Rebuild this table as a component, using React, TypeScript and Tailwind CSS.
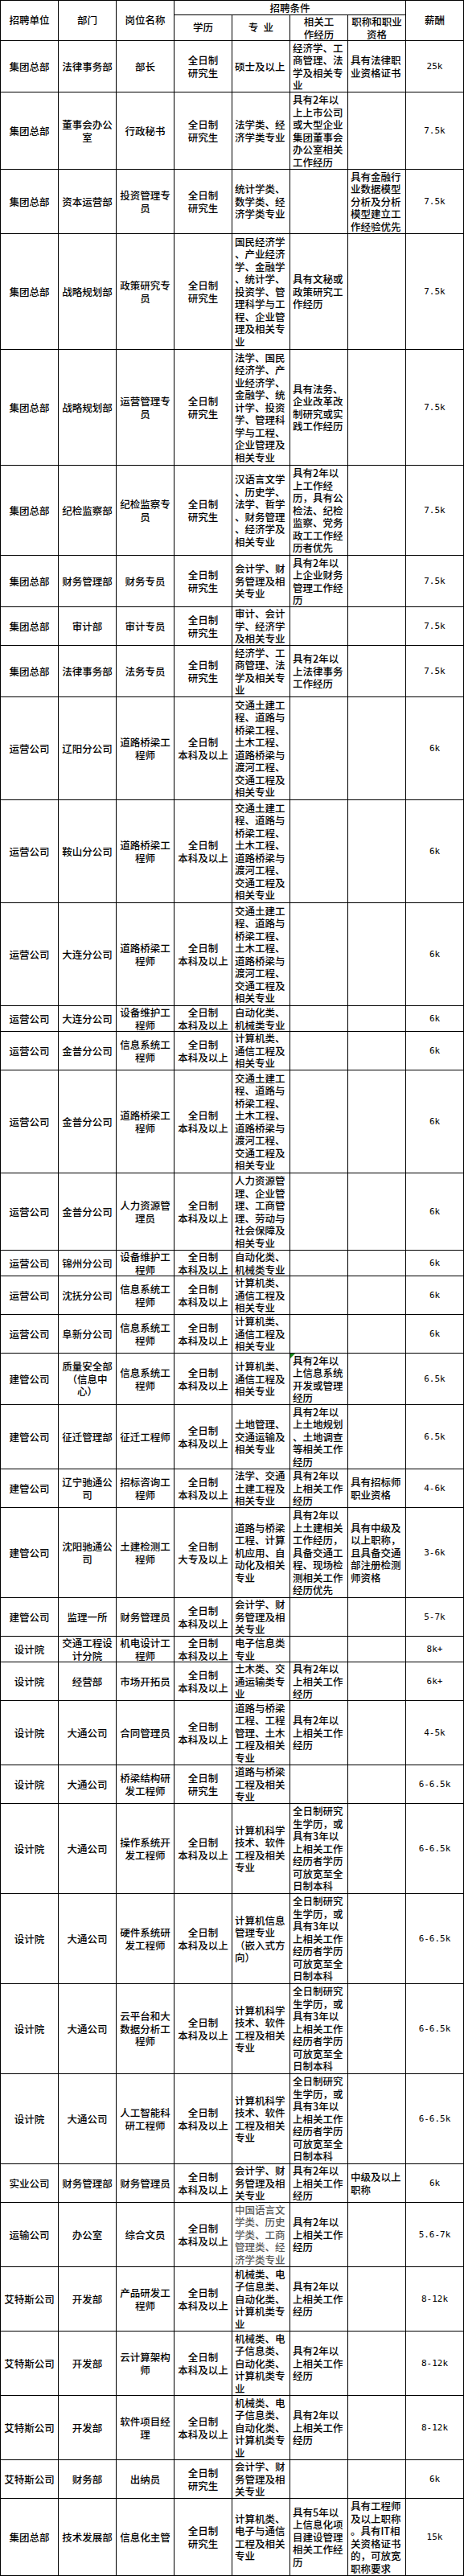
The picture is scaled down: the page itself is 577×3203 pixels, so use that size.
import React from "react";

type Row = { h: number; c: string[]; gray?: boolean; mark?: boolean };

const QR = "全日制\n研究生";
const QB = "全日制\n本科及以上";
const ROAD =
  "交通土建工\n程、道路与\n桥梁工程、\n土木工程、\n道路桥梁与\n渡河工程、\n交通工程及\n相关专业";
const AUTO = "自动化类、\n机械类专业";
const COMP = "计算机类、\n通信工程及\n相关专业";
const ACC = "会计学、财\n务管理及相\n关专业";
const Y2 = "具有2年以\n上相关工作\n经历";
const CSE = "计算机科学\n技术、软件\n工程及相关\n专业";
const GRAD =
  "全日制研究\n生学历，或\n具有3年以\n上相关工作\n经历者学历\n可放宽至全\n日制本科";
const ATS = "机械类、电\n子信息类、\n自动化类、\n计算机类专\n业";

const rows: Row[] = [
  { h: 64, c: ["集团总部", "法律事务部", "部长", QR, "硕士及以上", "经济学、工\n商管理、法\n学及相关专\n业", "具有法律职\n业资格证书", "25k"] },
  { h: 96, c: ["集团总部", "董事会办公\n室", "行政秘书", QR, "法学类、经\n济学类专业", "具有2年以\n上上市公司\n或大型企业\n集团董事会\n办公室相关\n工作经历", "", "7.5k"] },
  { h: 80, c: ["集团总部", "资本运营部", "投资管理专\n员", QR, "统计学类、\n数学类、经\n济学类专业", "", "具有金融行\n业数据模型\n分析及分析\n模型建立工\n作经验优先", "7.5k"] },
  { h: 144, c: ["集团总部", "战略规划部", "政策研究专\n员", QR, "国民经济学\n、产业经济\n学、金融学\n、统计学、\n投资学、管\n理科学与工\n程、企业管\n理及相关专\n业", "具有文秘或\n政策研究工\n作经历", "", "7.5k"] },
  { h: 144, c: ["集团总部", "战略规划部", "运营管理专\n员", QR, "法学、国民\n经济学、产\n业经济学、\n金融学、统\n计学、投资\n学、管理科\n学与工程、\n企业管理及\n相关专业", "具有法务、\n企业改革改\n制研究或实\n践工作经历", "", "7.5k"] },
  { h: 112, c: ["集团总部", "纪检监察部", "纪检监察专\n员", QR, "汉语言文学\n、历史学、\n法学、哲学\n、财务管理\n、经济学及\n相关专业", "具有2年以\n上工作经\n历，具有公\n检法、纪检\n监察、党务\n政工工作经\n历者优先", "", "7.5k"] },
  { h: 64, c: ["集团总部", "财务管理部", "财务专员", QR, "会计学、财\n务管理及相\n关专业", "具有2年以\n上企业财务\n管理工作经\n历", "", "7.5k"] },
  { h: 48, c: ["集团总部", "审计部", "审计专员", QR, "审计、会计\n学、经济学\n及相关专业", "", "", "7.5k"] },
  { h: 64, c: ["集团总部", "法律事务部", "法务专员", QR, "经济学、工\n商管理、法\n学及相关专\n业", "具有2年以\n上法律事务\n工作经历", "", "7.5k"] },
  { h: 128, c: ["运营公司", "辽阳分公司", "道路桥梁工\n程师", QB, ROAD, "", "", "6k"] },
  { h: 128, c: ["运营公司", "鞍山分公司", "道路桥梁工\n程师", QB, ROAD, "", "", "6k"] },
  { h: 128, c: ["运营公司", "大连分公司", "道路桥梁工\n程师", QB, ROAD, "", "", "6k"] },
  { h: 32, c: ["运营公司", "大连分公司", "设备维护工\n程师", QB, AUTO, "", "", "6k"] },
  { h: 48, c: ["运营公司", "金普分公司", "信息系统工\n程师", QB, COMP, "", "", "6k"] },
  { h: 128, c: ["运营公司", "金普分公司", "道路桥梁工\n程师", QB, ROAD, "", "", "6k"] },
  { h: 96, c: ["运营公司", "金普分公司", "人力资源管\n理员", QB, "人力资源管\n理、企业管\n理、工商管\n理、劳动与\n社会保障及\n相关专业", "", "", "6k"] },
  { h: 32, c: ["运营公司", "锦州分公司", "设备维护工\n程师", QB, AUTO, "", "", "6k"] },
  { h: 48, c: ["运营公司", "沈抚分公司", "信息系统工\n程师", QB, COMP, "", "", "6k"] },
  { h: 48, c: ["运营公司", "阜新分公司", "信息系统工\n程师", QB, COMP, "", "", "6k"] },
  { h: 64, mark: true, c: ["建管公司", "质量安全部\n（信息中\n心）", "信息系统工\n程师", QB, COMP, "具有2年以\n上信息系统\n开发或管理\n经历", "", "6.5k"] },
  { h: 80, c: ["建管公司", "征迁管理部", "征迁工程师", QB, "土地管理、\n交通运输及\n相关专业", "具有2年以\n上土地规划\n、土地调查\n等相关工作\n经历", "", "6.5k"] },
  { h: 48, c: ["建管公司", "辽宁驰通公\n司", "招标咨询工\n程师", QB, "法学、交通\n土建工程及\n相关专业", Y2, "具有招标师\n职业资格", "4-6k"] },
  { h: 112, c: ["建管公司", "沈阳驰通公\n司", "土建检测工\n程师", "全日制\n大专及以上", "道路与桥梁\n工程、计算\n机应用、自\n动化及相关\n专业", "具有2年以\n上土建相关\n工作经历，\n具备交通工\n程、现场检\n测相关工作\n经历优先", "具有中级及\n以上职称，\n且具备交通\n部注册检测\n师资格", "3-6k"] },
  { h: 48, c: ["建管公司", "监理一所", "财务管理员", QB, ACC, "", "", "5-7k"] },
  { h: 32, c: ["设计院", "交通工程设\n计分院", "机电设计工\n程师", QB, "电子信息类\n专业", "", "", "8k+"] },
  { h: 48, c: ["设计院", "经营部", "市场开拓员", QB, "土木类、交\n通运输类专\n业", Y2, "", "6k+"] },
  { h: 80, c: ["设计院", "大通公司", "合同管理员", QB, "道路与桥梁\n工程、工程\n管理、土木\n工程及相关\n专业", Y2, "", "4-5k"] },
  { h: 48, c: ["设计院", "大通公司", "桥梁结构研\n发工程师", QR, "道路与桥梁\n工程及相关\n专业", "", "", "6-6.5k"] },
  { h: 112, c: ["设计院", "大通公司", "操作系统开\n发工程师", QB, CSE, GRAD, "", "6-6.5k"] },
  { h: 112, c: ["设计院", "大通公司", "硬件系统研\n发工程师", QB, "计算机信息\n管理专业\n（嵌入式方\n向）", GRAD, "", "6-6.5k"] },
  { h: 112, c: ["设计院", "大通公司", "云平台和大\n数据分析工\n程师", QB, CSE, GRAD, "", "6-6.5k"] },
  { h: 112, c: ["设计院", "大通公司", "人工智能科\n研工程师", QB, CSE, GRAD, "", "6-6.5k"] },
  { h: 48, c: ["实业公司", "财务管理部", "财务管理员", QB, ACC, Y2, "中级及以上\n职称", "6k"] },
  { h: 80, gray: true, c: ["运输公司", "办公室", "综合文员", QB, "中国语言文\n学类、历史\n学类、工商\n管理类、经\n济学类专业", Y2, "", "5.6-7k"] },
  { h: 80, c: ["艾特斯公司", "开发部", "产品研发工\n程师", QB, ATS, Y2, "", "8-12k"] },
  { h: 80, c: ["艾特斯公司", "开发部", "云计算架构\n师", QB, ATS, Y2, "", "8-12k"] },
  { h: 80, c: ["艾特斯公司", "开发部", "软件项目经\n理", QB, ATS, Y2, "", "8-12k"] },
  { h: 48, c: ["艾特斯公司", "财务部", "出纳员", QR, ACC, "", "", "6k"] },
  { h: 96, c: ["集团总部", "技术发展部", "信息化主管", QR, "计算机类、\n电子与通信\n工程及相关\n专业", "具有5年以\n上信息化项\n目建设管理\n相关工作经\n历", "具有工程师\n及以上职称\n。具有IT相\n关资格证书\n的，可放宽\n职称要求", "15k"] },
];

const H: Record<number, string> = {
  32: "h-[32px]",
  48: "h-[48px]",
  64: "h-[64px]",
  80: "h-[80px]",
  96: "h-[96px]",
  112: "h-[112px]",
  128: "h-[128px]",
  144: "h-[144px]",
};

const base =
  "relative flex shrink-0 w-[72px] items-center border-r border-b border-black overflow-visible";

function Cell({
  text,
  col,
  gray,
  mark,
}: {
  text: string;
  col: number;
  gray?: boolean;
  mark?: boolean;
}) {
  const left = col === 4 || col === 5 || col === 6;
  const salary = col === 7;
  return (
    <div className={base + (left ? " justify-start text-left pl-[3px]" : " justify-center text-center")}>
      {mark && (
        <span className="absolute left-0 top-0 w-0 h-0 border-t-[6px] border-r-[6px] border-t-[#1a8a1a] border-r-transparent" />
      )}
      {salary ? (
        <span className="whitespace-pre font-['DejaVu_Sans_Mono',monospace] text-[11px] leading-[15.5px] text-black">
          {text}
        </span>
      ) : (
        <span
          className={
            "whitespace-pre leading-[15.5px] " + (gray ? "text-[#5a5a5a]" : "text-black")
          }
        >
          {text}
        </span>
      )}
    </div>
  );
}

export default function App() {
  return (
    <div className="bg-white min-h-[3203px] font-['Noto_Sans_CJK_SC',sans-serif] font-medium text-[12.5px] text-black">
      <div className="w-[577px] border-l border-t border-black">
        {/* header */}
        <div className="flex h-[50px]">
          <div className={base + " justify-center text-center"}>招聘单位</div>
          <div className={base + " justify-center text-center"}>部门</div>
          <div className={base + " justify-center text-center"}>岗位名称</div>
          <div className="flex flex-col shrink-0 w-[288px]">
            <div className="flex h-[18px] shrink-0 items-center justify-center border-r border-b border-black leading-[15.5px]">
              招聘条件
            </div>
            <div className="flex flex-1">
              <div className={base + " justify-center text-center"}>学历</div>
              <div className={base + " justify-center text-center whitespace-pre"}>{"专\u2002业"}</div>
              <div className={base + " justify-center text-center"}>
                <span className="whitespace-pre leading-[15.5px]">{"相关工\n作经历"}</span>
              </div>
              <div className={base + " justify-center text-center"}>
                <span className="whitespace-pre leading-[15.5px]">{"职称和职业\n资格"}</span>
              </div>
            </div>
          </div>
          <div className={base + " justify-center text-center"}>薪酬</div>
        </div>
        {rows.map((r, i) => (
          <div key={i} className={"flex " + H[r.h]}>
            {r.c.map((t, j) => (
              <Cell
                key={j}
                text={t}
                col={j}
                gray={r.gray && j === 4}
                mark={r.mark && j === 5}
              />
            ))}
          </div>
        ))}
      </div>
    </div>
  );
}
